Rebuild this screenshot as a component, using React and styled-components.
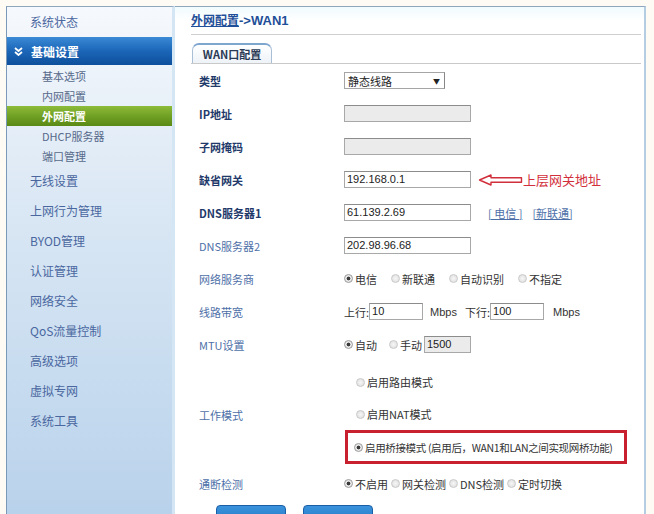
import React from 'react';
import styled, { createGlobalStyle } from 'styled-components';

const GlobalStyle = createGlobalStyle`
  html, body {
    margin: 0;
    padding: 0;
    background: #fdfbf3;
  }
  body {
    font-family: "Noto Sans CJK SC", "Liberation Sans", sans-serif;
    overflow: hidden;
  }
`;

const Frame = styled.div`
  width: 654px;
  height: 514px;
  box-sizing: border-box;
  padding: 6px 6px 0 6px;
  display: flex;
  overflow: hidden;
`;

const Sidebar = styled.div`
  width: 169px;
  flex-shrink: 0;
  box-sizing: border-box;
  border-top: 1px solid #8fa7be;
  border-left: 1px solid #7a98b8;
  border-right: 3px solid #d4e5f3;
  background: linear-gradient(to bottom, #f6f9fd 0%, #dde9f5 35%, #c6dbef 75%, #b9d2eb 100%);
  display: flex;
  flex-direction: column;
`;

const MenuItem = styled.div`
  height: 30px;
  line-height: 30px;
  padding-left: 23px;
  font-size: 12px;
  color: #4a67a0;
`;

const MenuGroup = styled.div`
  height: 28px;
  display: flex;
  align-items: center;
  gap: 8px;
  padding-left: 7px;
  background: linear-gradient(to bottom, #3a8ad6 0%, #1c66b8 50%, #0d4f9c 100%);
  color: #fff;
  font-size: 12px;
  font-weight: bold;
`;

const SubItem = styled.div`
  height: 20px;
  line-height: 20px;
  padding-left: 35px;
  font-size: 11px;
  color: ${(p) => (p.$active ? '#fff' : '#56698a')};
  font-weight: ${(p) => (p.$active ? 'bold' : 'normal')};
  background: ${(p) =>
    p.$active ? 'linear-gradient(to bottom, #8dbb3a 0%, #6e9e22 55%, #5a8a16 100%)' : 'transparent'};
`;

const SubList = styled.div`
  padding: 1px 0 0;
`;

const Main = styled.div`
  flex: 1;
  border-top: 1px solid #8fa7be;
  border-right: 2px solid #b5cde3;
  margin-right: 2px;
  background: linear-gradient(to bottom, #f1fbfe 0px, #ffffff 14px);
`;

const Content = styled.div`
  margin: 0 3px 0 16px;
`;

const TitleBar = styled.div`
  height: 27px;
  line-height: 26px;
  border-bottom: 1px solid #cfcfcf;
  font-size: 12px;
  font-weight: bold;
  color: #1f4f98;
`;

const TitleLink = styled.span`
  text-decoration: underline;
`;

const TitleRest = styled.span`
  font-family: "Liberation Sans", "Noto Sans CJK SC", sans-serif;
  font-size: 13px;
`;

const TabBar = styled.div`
  padding-top: 8px;
  padding-left: 1px;
  border-bottom: 1px solid #c9c9c9;
  display: flex;
`;

const Tab = styled.div`
  width: 78px;
  height: 18px;
  line-height: 19px;
  text-align: center;
  font-size: 11px;
  font-weight: bold;
  color: #2a3a55;
  border: 1px solid #a9bfd6;
  border-top: 2px solid #7fa6cf;
  border-bottom: none;
  border-radius: 7px 7px 0 0;
  background: linear-gradient(to bottom, #ffffff 0%, #eef3f8 100%);
`;

const Row = styled.div`
  display: grid;
  grid-template-columns: 153px 1fr;
  align-items: center;
  height: 33px;
`;

const Label = styled.div`
  padding-left: 8px;
  font-size: 11px;
  font-weight: ${(p) => (p.$bold ? 'bold' : 'normal')};
  color: ${(p) => (p.$bold ? '#1f3a6a' : '#4d6fa8')};
`;

const Field = styled.div`
  display: flex;
  align-items: center;
  font-size: 11px;
  color: #333;
  white-space: nowrap;
`;

const Select = styled.div`
  height: 15px;
  width: 92px;
  border: 1px solid #a5a5a5;
  border-right-color: #888;
  display: flex;
  align-items: center;
  justify-content: space-between;
  padding: 0 4px 0 3px;
  box-sizing: content-box;
  font-size: 11px;
  color: #222;
  background: #fff;
`;

const Caret = styled.span`
  font-size: 7px;
  color: #222;
`;

const Input = styled.div`
  width: ${(p) => p.$w || 123}px;
  height: 15px;
  line-height: 15px;
  border: 1px solid #a8a8a8;
  border-top-color: #8c8c8c;
  padding-left: 2px;
  box-sizing: content-box;
  font-family: "Liberation Sans", sans-serif;
  font-size: 11px;
  color: #222;
  background: ${(p) => (p.$disabled ? '#ebebeb' : '#fff')};
`;

const Note = styled.div`
  display: flex;
  align-items: center;
  margin-left: 7px;
  font-size: 13px;
  color: #d22f3c;
`;

const Link = styled.span`
  color: #4d6fa8;
  text-decoration: underline;
  margin-left: ${(p) => p.$ml || 0}px;
  font-size: 11px;
`;

const Options = styled.div`
  display: flex;
  align-items: center;
  gap: ${(p) => p.$gap || 14}px;
`;

const Option = styled.label`
  display: flex;
  align-items: center;
  gap: 2px;
  font-size: 11px;
  color: #333;
  white-space: nowrap;
`;

const Dot = styled.span`
  width: 7px;
  height: 7px;
  border-radius: 50%;
  border: 1px solid ${(p) => (p.$on ? '#9a9a9a' : '#c9c9c9')};
  background: ${(p) =>
    p.$on
      ? 'radial-gradient(circle, #3a3a3a 0 1.6px, #e8e8e8 2.2px)'
      : 'radial-gradient(circle, #f6f6f6 0, #dcdcdc 100%)'};
  flex-shrink: 0;
`;

const Unit = styled.span`
  font-family: "Liberation Sans", sans-serif;
  font-size: 11px;
  color: #333;
  margin: 0 ${(p) => p.$mr || 0}px 0 ${(p) => p.$ml || 0}px;
`;

const ModeRow = styled.div`
  display: grid;
  grid-template-columns: 153px 1fr;
  align-items: center;
  padding: 5px 0 3px;
`;

const ModeList = styled.div`
  display: flex;
  flex-direction: column;
`;

const ModeItem = styled.div`
  display: flex;
  align-items: center;
  padding-left: ${(p) => (p.$boxed ? 6 : 8)}px;
  margin-left: 1px;
  width: 282px;
  box-sizing: border-box;
  border: 3px solid ${(p) => (p.$boxed ? '#c8202f' : 'transparent')};
  height: ${(p) => (p.$boxed ? 34 : 32)}px;

  & > label {
    font-size: ${(p) => (p.$boxed ? '10.5px' : '11px')};
    letter-spacing: ${(p) => (p.$boxed ? '-0.35px' : '0')};
  }
`;

const Buttons = styled.div`
  display: flex;
  gap: 17px;
  padding: 5px 0 0 25px;
`;

const Button = styled.div`
  width: 68px;
  height: 24px;
  border-radius: 4px;
  background: linear-gradient(to bottom, #3a93dc 0%, #1d6cbc 100%);
  border: 1px solid #1a5ea6;
`;

const Chevrons = () => (
  <svg width="9" height="9" viewBox="0 0 9 9">
    <path d="M1 1 L4.5 4 L8 1 M1 5 L4.5 8 L8 5" fill="none" stroke="#fff" strokeWidth="1.8" />
  </svg>
);

const Arrow = () => (
  <svg width="45" height="12" viewBox="0 0 45 12">
    <path
      d="M1.5 6 L13 1 L13 3.8 L43.5 3.8 L43.5 8.2 L13 8.2 L13 11 Z"
      fill="#fff"
      stroke="#d22f3c"
      strokeWidth="1.4"
      strokeLinejoin="round"
    />
  </svg>
);

const Radio = ({ on, children }) => (
  <Option>
    <Dot $on={on} />
    {children}
  </Option>
);

export default function App() {
  return (
    <>
      <GlobalStyle />
      <Frame>
        <Sidebar>
          <MenuItem>系统状态</MenuItem>
          <MenuGroup>
            <Chevrons />
            基础设置
          </MenuGroup>
          <SubList>
            <SubItem>基本选项</SubItem>
            <SubItem>内网配置</SubItem>
            <SubItem $active>外网配置</SubItem>
            <SubItem>DHCP服务器</SubItem>
            <SubItem>端口管理</SubItem>
          </SubList>
          <MenuItem>无线设置</MenuItem>
          <MenuItem>上网行为管理</MenuItem>
          <MenuItem>BYOD管理</MenuItem>
          <MenuItem>认证管理</MenuItem>
          <MenuItem>网络安全</MenuItem>
          <MenuItem>QoS流量控制</MenuItem>
          <MenuItem>高级选项</MenuItem>
          <MenuItem>虚拟专网</MenuItem>
          <MenuItem>系统工具</MenuItem>
        </Sidebar>
        <Main>
          <Content>
            <TitleBar>
              <TitleLink>外网配置</TitleLink>
              <TitleRest>-&gt;WAN1</TitleRest>
            </TitleBar>
            <TabBar>
              <Tab>WAN口配置</Tab>
            </TabBar>
            <Row>
              <Label $bold>类型</Label>
              <Field>
                <Select>
                  静态线路
                  <Caret>▼</Caret>
                </Select>
              </Field>
            </Row>
            <Row>
              <Label $bold>IP地址</Label>
              <Field>
                <Input $disabled />
              </Field>
            </Row>
            <Row>
              <Label $bold>子网掩码</Label>
              <Field>
                <Input $disabled />
              </Field>
            </Row>
            <Row>
              <Label $bold>缺省网关</Label>
              <Field>
                <Input>192.168.0.1</Input>
                <Note>
                  <Arrow />
                  上层网关地址
                </Note>
              </Field>
            </Row>
            <Row>
              <Label $bold>DNS服务器1</Label>
              <Field>
                <Input>61.139.2.69</Input>
                <Link $ml={17}>[ 电信 ]</Link>
                <Link $ml={10}>[新联通]</Link>
              </Field>
            </Row>
            <Row>
              <Label>DNS服务器2</Label>
              <Field>
                <Input>202.98.96.68</Input>
              </Field>
            </Row>
            <Row>
              <Label>网络服务商</Label>
              <Field>
                <Options>
                  <Radio on>电信</Radio>
                  <Radio>新联通</Radio>
                  <Radio>自动识别</Radio>
                  <Radio>不指定</Radio>
                </Options>
              </Field>
            </Row>
            <Row>
              <Label>线路带宽</Label>
              <Field>
                上行:
                <Input $w={50}>10</Input>
                <Unit $ml={7} $mr={8}>Mbps</Unit>
                下行:
                <Input $w={50}>100</Input>
                <Unit $ml={9}>Mbps</Unit>
              </Field>
            </Row>
            <Row>
              <Label>MTU设置</Label>
              <Field>
                <Options $gap={12}>
                  <Radio on>自动</Radio>
                  <Option>
                    <Dot />
                    手动
                    <Input $w={43} $disabled>1500</Input>
                  </Option>
                </Options>
              </Field>
            </Row>
            <ModeRow>
              <Label>工作模式</Label>
              <ModeList>
                <ModeItem>
                  <Radio>启用路由模式</Radio>
                </ModeItem>
                <ModeItem>
                  <Radio>启用NAT模式</Radio>
                </ModeItem>
                <ModeItem $boxed>
                  <Radio on>启用桥接模式 (启用后，WAN1和LAN之间实现网桥功能)</Radio>
                </ModeItem>
              </ModeList>
            </ModeRow>
            <Row>
              <Label>通断检测</Label>
              <Field>
                <Options $gap={3}>
                  <Radio on>不启用</Radio>
                  <Radio>网关检测</Radio>
                  <Radio>DNS检测</Radio>
                  <Radio>定时切换</Radio>
                </Options>
              </Field>
            </Row>
            <Buttons>
              <Button />
              <Button />
            </Buttons>
          </Content>
        </Main>
      </Frame>
    </>
  );
}
